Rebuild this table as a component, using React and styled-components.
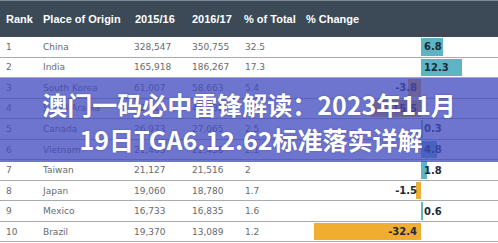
import React from "react";
import styled, { createGlobalStyle } from "styled-components";

const GlobalStyle = createGlobalStyle`
  html, body {
    margin: 0;
    padding: 0;
    background: #ffffff;
  }
`;

const rows = [
  { rank: 1, place: "China", y1: "328,547", y2: "350,755", share: "32.5", change: 6.8 },
  { rank: 2, place: "India", y1: "165,918", y2: "186,267", share: "17.3", change: 12.3 },
  { rank: 3, place: "South Korea", y1: "61,007", y2: "58,663", share: "5.4", change: -3.8 },
  { rank: 4, place: "Saudi Arabia", y1: "52,611", y2: "44,432", share: "4.1", change: -15.5 },
  { rank: 5, place: "Canada", y1: "26,973", y2: "27,065", share: "2.5", change: 0.3 },
  { rank: 6, place: "Vietnam", y1: "21,403", y2: "22,438", share: "2.1", change: 4.8 },
  { rank: 7, place: "Taiwan", y1: "21,127", y2: "21,516", share: "2", change: 1.8 },
  { rank: 8, place: "Japan", y1: "19,060", y2: "18,780", share: "1.7", change: -1.5 },
  { rank: 9, place: "Mexico", y1: "16,733", y2: "16,835", share: "1.6", change: 0.6 },
  { rank: 10, place: "Brazil", y1: "19,370", y2: "13,089", share: "1.2", change: -32.4 },
];

const SCALE = 3.3;

const App = () => {
  return (
    <>
      <GlobalStyle />
      <Frame>
        <Table>
          <HeaderRow>
            <HeadCell>Rank</HeadCell>
            <HeadCell>Place of Origin</HeadCell>
            <HeadCell $pad={6}>2015/16</HeadCell>
            <HeadCell $pad={6}>2016/17</HeadCell>
            <HeadCell $pad={5}>% of Total</HeadCell>
            <HeadCell $pad={6}>% Change</HeadCell>
          </HeaderRow>
          {rows.map((row) => (
            <Row key={row.rank}>
              <Cell>{row.rank}</Cell>
              <Cell>{row.place}</Cell>
              <Cell $pad={5}>{row.y1}</Cell>
              <Cell $pad={6}>{row.y2}</Cell>
              <Cell $pad={6}>{row.share}</Cell>
              <ChangeCell>
                <NegSide>
                  {row.change < 0 && (
                    <Bar $neg style={{ width: `${Math.abs(row.change) * SCALE}px` }}>
                      <BarLabel $neg>{row.change}</BarLabel>
                    </Bar>
                  )}
                </NegSide>
                <PosSide>
                  {row.change >= 0 && (
                    <Bar style={{ width: `${Math.max(row.change * SCALE, 1.5)}px` }}>
                      <BarLabel>{row.change}</BarLabel>
                    </Bar>
                  )}
                </PosSide>
              </ChangeCell>
            </Row>
          ))}
        </Table>
        <Banner>
          <BannerLine>澳门一码必中雷锋解读：2023年11月</BannerLine>
          <BannerLine $shift={4}>19日TGA6.12.62标准落实详解</BannerLine>
        </Banner>
      </Frame>
    </>
  );
};

const Frame = styled.div`
  position: relative;
  width: 498px;
  height: 243px;
  overflow: hidden;
  background: #ffffff;
`;

const Table = styled.div`
  display: flex;
  flex-direction: column;
`;

const columns = "37px 92px 57px 53px 61px 1fr";

const HeaderRow = styled.div`
  display: grid;
  grid-template-columns: ${columns};
  height: 37px;
  align-items: center;
  background: #3c4a57;
  border-top: 1px solid #7f8b95;
  box-sizing: border-box;
`;

const HeadCell = styled.div`
  padding-left: ${(p) => p.$pad ?? 6}px;
  font-family: "Liberation Sans", Arial, sans-serif;
  font-weight: bold;
  font-size: 11px;
  color: #ffffff;
  white-space: nowrap;
`;

const Row = styled.div`
  display: grid;
  grid-template-columns: ${columns};
  height: 20.55px;
  box-sizing: border-box;
  border-bottom: 1.5px solid #a6abb0;
  align-items: center;
`;

const Cell = styled.div`
  padding-left: ${(p) => p.$pad ?? 6}px;
  font-family: "DejaVu Sans", Verdana, sans-serif;
  font-size: 9px;
  color: #666a6e;
  white-space: nowrap;
`;

const ChangeCell = styled.div`
  display: grid;
  grid-template-columns: 121px 1fr;
  height: 100%;
  padding: 1px 0;
  box-sizing: border-box;
`;

const NegSide = styled.div`
  display: flex;
  justify-content: flex-end;
`;

const PosSide = styled.div`
  display: flex;
  justify-content: flex-start;
`;

const Bar = styled.div`
  display: flex;
  align-items: center;
  justify-content: ${(p) => (p.$neg ? "flex-end" : "flex-start")};
  height: 100%;
  background: ${(p) => (p.$neg ? "#f1ad2f" : "#5cb4c4")};
`;

const BarLabel = styled.span`
  flex-shrink: 0;
  padding: ${(p) => (p.$neg ? "0 4px 0 0" : "0 0 0 3px")};
  font-family: "DejaVu Sans", Verdana, sans-serif;
  font-weight: bold;
  font-size: 10px;
  color: #1c2a35;
  white-space: nowrap;
`;

const Banner = styled.div`
  position: absolute;
  left: 0;
  right: 0;
  top: 78px;
  height: 84px;
  background: rgba(64, 74, 190, 0.76);
  display: flex;
  flex-direction: column;
  align-items: center;
  justify-content: center;
  padding-top: 3px;
  box-sizing: border-box;
`;

const BannerLine = styled.div`
  padding-left: ${(p) => p.$shift ?? 0}px;
  font-family: "Noto Sans CJK SC", "Noto Sans", sans-serif;
  font-weight: bold;
  font-size: 25px;
  line-height: 35px;
  color: #ffffff;
  white-space: nowrap;
  text-shadow: 0 0 2px rgba(30, 30, 80, 0.35);
`;

export default App;
